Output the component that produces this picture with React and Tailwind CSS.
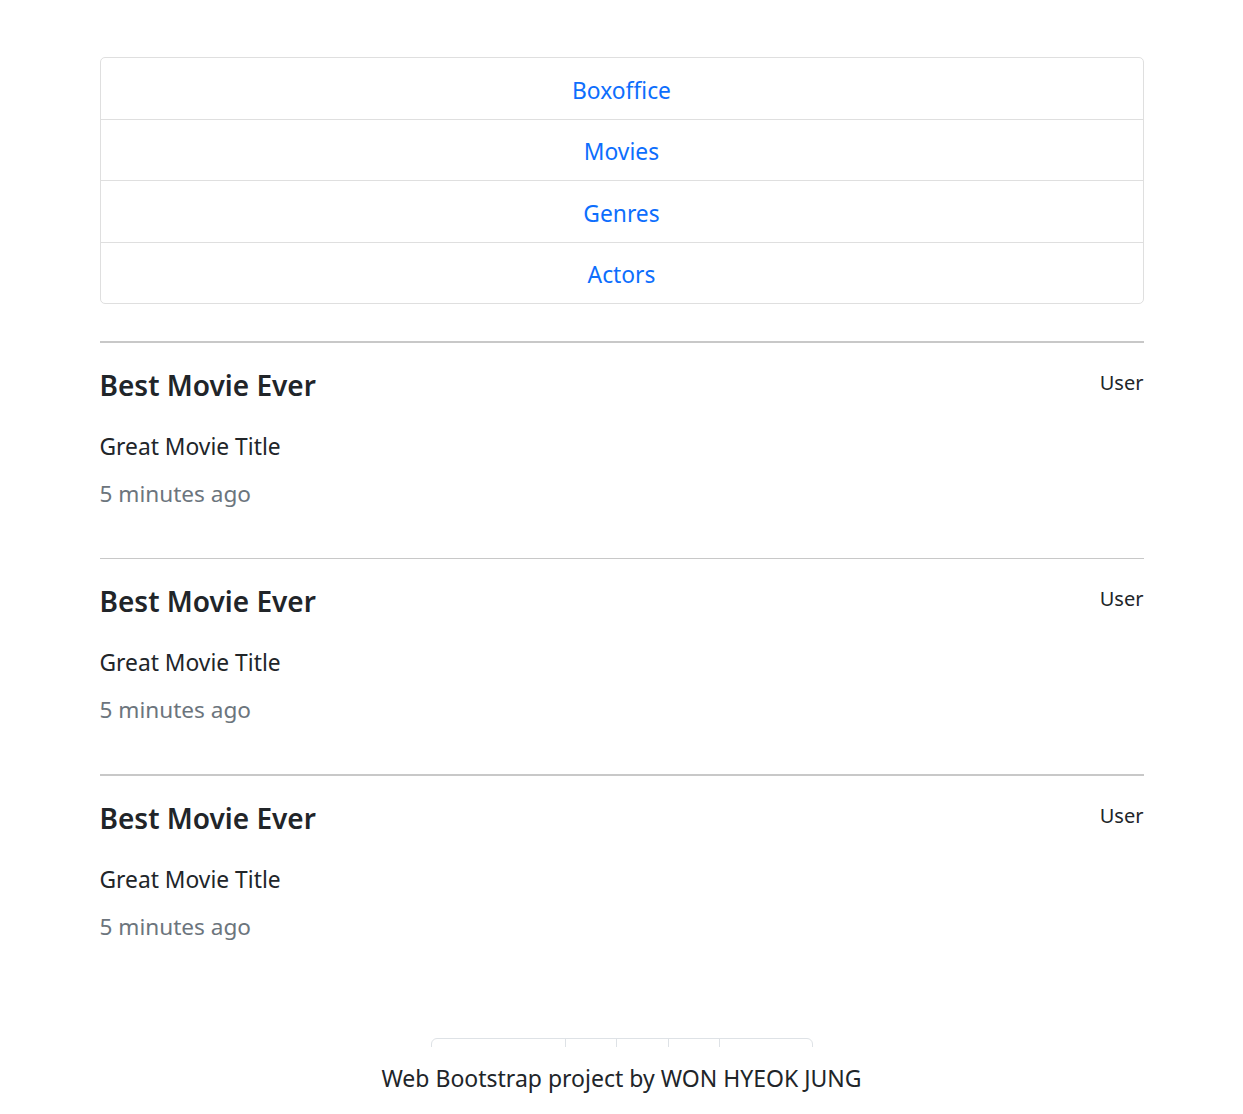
const links = ['Boxoffice', 'Movies', 'Genres', 'Actors'];

const posts = [
  { title: 'Best Movie Ever', movie: 'Great Movie Title', time: '5 minutes ago', user: 'User', rule: 'h-[2px]' },
  { title: 'Best Movie Ever', movie: 'Great Movie Title', time: '5 minutes ago', user: 'User', rule: 'h-px' },
  { title: 'Best Movie Ever', movie: 'Great Movie Title', time: '5 minutes ago', user: 'User', rule: 'h-[2px]' },
];

const pages = [
  { label: 'Previous', w: 'w-[134px]' },
  { label: '1', w: 'w-[51px]' },
  { label: '2', w: 'w-[52px]' },
  { label: '3', w: 'w-[51px]' },
  { label: 'Next', w: 'w-[92px]' },
];

function Post({ post }) {
  return (
    <div>
      <div className={`${post.rule} bg-[#c8c8c8]`} />
      <div className="flex justify-between pt-[25px] pb-[49px]">
        <div>
          <h3 className="text-[28px] leading-[34px] font-semibold text-[#212529]">{post.title}</h3>
          <p className="mt-[30px] text-[22.8px] leading-[30px] text-[#212529]">{post.movie}</p>
          <p className="mt-[17px] text-[22.6px] leading-[30px] text-[#6c757d]">{post.time}</p>
        </div>
        <span className="text-[20px] leading-[30px] text-[#212529]">{post.user}</span>
      </div>
    </div>
  );
}

export default function App() {
  return (
    <div className="bg-white font-['Noto_Sans',sans-serif] text-[#212529]">
      <main className="w-[1044px] mx-auto pt-[57px] pb-[80px]">
        <ul className="border border-[#dfdfdf] rounded-[5px] divide-y divide-[#dfdfdf]">
          {links.map((l) => (
            <li key={l} className="pt-[17.75px] pb-[12.75px] leading-[30px] flex items-center justify-center text-[22.8px] text-[#0d6efd]">
              {l}
            </li>
          ))}
        </ul>

        <div className="mt-[37px]">
          {posts.map((p, i) => (
            <Post key={i} post={p} />
          ))}
        </div>

        <nav className="flex justify-center mt-[47px]">
          <ul className="flex border border-[#dee2e6] rounded-[6px] divide-x divide-[#dee2e6]">
            {pages.map((pg) => (
              <li key={pg.label} className={`${pg.w} h-[50px] flex items-center justify-center text-[20px] text-[#0d6efd]`}>
                {pg.label}
              </li>
            ))}
          </ul>
        </nav>
      </main>

      <footer className="fixed left-0 right-0 bottom-0 h-[67px] pb-[4px] bg-white flex items-center justify-center text-[23px] text-[#212529]">
        Web Bootstrap project by WON HYEOK JUNG
      </footer>
    </div>
  );
}
